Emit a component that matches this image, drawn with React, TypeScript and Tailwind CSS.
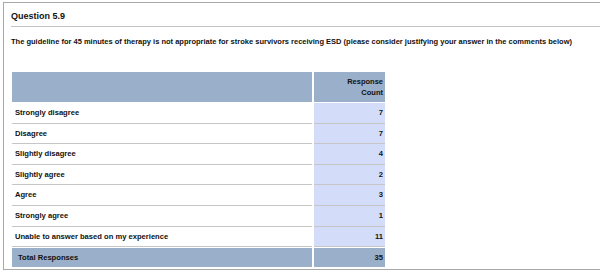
import React from "react";

const rows: [string, string][] = [
  ["Strongly disagree", "7"],
  ["Disagree", "7"],
  ["Slightly disagree", "4"],
  ["Slightly agree", "2"],
  ["Agree", "3"],
  ["Strongly agree", "1"],
  ["Unable to answer based on my experience", "11"],
];

export default function App() {
  return (
    <div
      className="w-[600px] h-[275px] bg-white overflow-hidden pt-[2px] pl-[3px] text-[#111]"
      style={{ fontFamily: '"Liberation Sans", Arial, Helvetica, sans-serif' }}
    >
      <div className="w-[700px] h-[268px] border-l border-t border-b border-[#a8a8a8] pl-[7px]">
        <div className="h-[24px] border-b border-[#c4c4c4] flex items-end pb-[5px]">
          <span className="text-[9px] font-bold leading-[10px]">Question 5.9</span>
        </div>
        <div className="mt-[10px] text-[7.5px] font-bold leading-[9px] whitespace-nowrap">
          The guideline for 45 minutes of therapy is not appropriate for stroke survivors receiving ESD (please consider justifying your answer in the comments below)
        </div>
        <div className="mt-[26px] ml-[1px] w-[373px]">
          <div className="flex h-[30px] mb-[1px]">
            <div className="w-[300px] bg-[#9aafca]" />
            <div className="w-[2px]" />
            <div className="w-[71px] bg-[#9aafca] flex flex-col justify-center items-end pr-[2px] text-[7.5px] font-bold leading-[11px]">
              <span>Response</span>
              <span>Count</span>
            </div>
          </div>
          {rows.map(([label, count]) => (
            <div key={label} className="flex h-[20.6px]">
              <div className="w-[300px] border-b border-[#c6c6c6] flex items-center pl-[3px] text-[7.6px] font-bold">
                {label}
              </div>
              <div className="w-[2px]" />
              <div className="w-[71px] bg-[#d3ddf9] border-b border-[#c6c6c6] flex items-center justify-end pr-[2px] text-[7.6px] font-bold">
                {count}
              </div>
            </div>
          ))}
          <div className="flex h-[19px] mt-[1px]">
            <div className="w-[300px] bg-[#9aafca] flex items-center pl-[6px] text-[7.6px] font-bold">
              Total Responses
            </div>
            <div className="w-[2px]" />
            <div className="w-[71px] bg-[#9aafca] flex items-center justify-end pr-[2px] text-[7.6px] font-bold">
              35
            </div>
          </div>
        </div>
      </div>
    </div>
  );
}
